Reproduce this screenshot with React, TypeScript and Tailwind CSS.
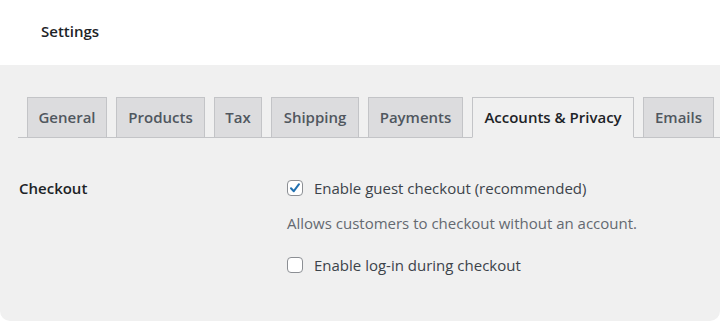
import React from "react";

const tabs = [
  { label: "General", w: "w-[80px]" },
  { label: "Products", w: "w-[89px]" },
  { label: "Tax", w: "w-[48px]" },
  { label: "Shipping", w: "w-[88px]" },
  { label: "Payments", w: "w-[95px]" },
  { label: "Accounts & Privacy", w: "w-[162px]", active: true },
  { label: "Emails", w: "w-[71px]" },
];

function Check({ checked }: { checked?: boolean }) {
  return (
    <span className="w-[16px] h-[16px] shrink-0 rounded-[4px] border border-[#8c8f94] bg-white flex items-center justify-center">
      {checked && (
        <svg width="14" height="14" viewBox="0 0 14 14">
          <path d="M3 7.2 L5.8 10.2 L11 3.2" fill="none" stroke="#2271b1" strokeWidth="2" strokeLinecap="round" strokeLinejoin="round" />
        </svg>
      )}
    </span>
  );
}

export default function App() {
  return (
    <div className="w-[720px] h-[321px] bg-white font-['Open_Sans',sans-serif] overflow-hidden">
      <div className="h-[65px] pl-[41px] pt-[20px] text-[15px] font-semibold text-[#1d2327] leading-[22px]">
        Settings
      </div>
      <div className="h-[256px] bg-[#f0f0f0] rounded-b-[10px] pt-[32px]">
        <div className="ml-[18px] pl-[9px] flex gap-[9px] border-b border-[#c3c4c7] h-[41px] items-end">
          {tabs.map((t) => (
            <div
              key={t.label}
              className={
                t.active
                  ? `${t.w} h-[41px] -mb-px flex items-center justify-center border border-[#c3c4c7] border-b-[#f0f0f0] bg-[#f0f0f0] text-[15px] font-semibold text-[#1d2327]`
                  : `${t.w} h-[40px] flex items-center justify-center border border-b-0 border-[#c3c4c7] bg-[#dcdcde] text-[15px] font-semibold text-[#50575e]`
              }
            >
              {t.label}
            </div>
          ))}
        </div>
        <div className="flex pt-[40px]">
          <div className="w-[287px] pl-[19px] text-[15px] font-semibold text-[#1d2327] leading-[20px]">
            Checkout
          </div>
          <div className="flex flex-col">
            <label className="flex items-center gap-[11px] text-[15px] text-[#3c434a] h-[20px]">
              <Check checked />
              Enable guest checkout (recommended)
            </label>
            <div className="mt-[15px] text-[15px] text-[#646970] h-[20px] leading-[20px]">
              Allows customers to checkout without an account.
            </div>
            <label className="mt-[22px] flex items-center gap-[11px] text-[15px] text-[#3c434a] h-[20px]">
              <Check />
              Enable log-in during checkout
            </label>
          </div>
        </div>
      </div>
    </div>
  );
}
